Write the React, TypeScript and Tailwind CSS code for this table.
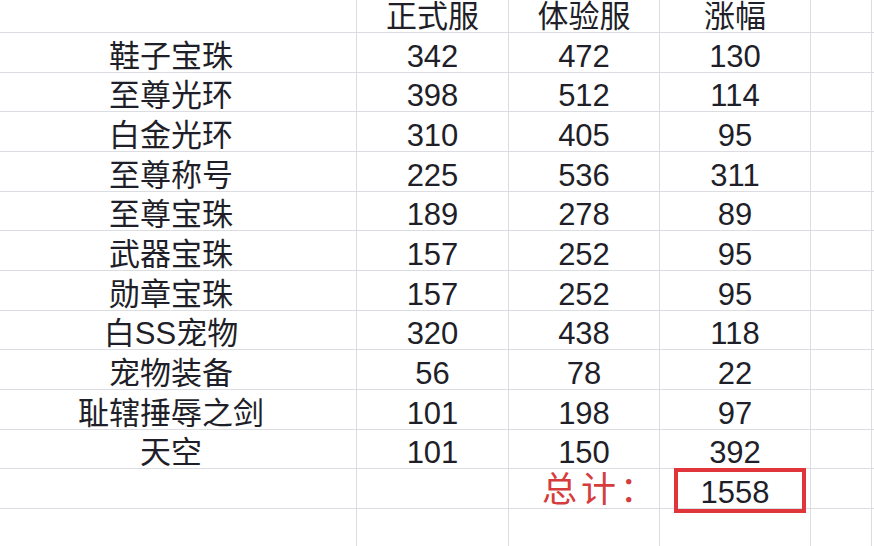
const rows: [string, number, number, number][] = [
  ["鞋子宝珠", 342, 472, 130],
  ["至尊光环", 398, 512, 114],
  ["白金光环", 310, 405, 95],
  ["至尊称号", 225, 536, 311],
  ["至尊宝珠", 189, 278, 89],
  ["武器宝珠", 157, 252, 95],
  ["勋章宝珠", 157, 252, 95],
  ["白SS宠物", 320, 438, 118],
  ["宠物装备", 56, 78, 22],
  ["耻辖捶辱之剑", 101, 198, 97],
  ["天空", 101, 150, 392],
];

const cell = "flex items-end justify-center border-r border-[#dcdde2] leading-[31px]";

function Row({ cells, h = "h-[39.67px]" }: { cells: (string | number)[]; h?: string }) {
  return (
    <div className={`flex ${h} border-b border-[#dcdde2]`}>
      <div className={`${cell} w-[357px] pr-[14px]`}>{cells[0]}</div>
      <div className={`${cell} w-[152px]`}>{cells[1]}</div>
      <div className={`${cell} w-[151px]`}>{cells[2]}</div>
      <div className={`${cell} w-[151px]`}>{cells[3]}</div>
      <div className={`${cell} w-[61px]`}></div>
      <div className="flex-1"></div>
    </div>
  );
}

export default function App() {
  return (
    <div className="w-[874px] h-[546px] overflow-hidden bg-white text-[#1f1f29] text-[31px] font-['Liberation_Sans','Noto_Sans_CJK_SC',sans-serif]">
      <Row cells={["", "正式服", "体验服", "涨幅"]} h="h-[33px]" />
      {rows.map((r) => (
        <Row key={r[0]} cells={r} />
      ))}

      {/* total row */}
      <div className="flex h-[39.67px] border-b border-[#dcdde2]">
        <div className={`${cell} w-[357px]`}></div>
        <div className={`${cell} w-[152px]`}></div>
        <div className={`${cell} w-[151px] justify-end! text-[35px] leading-[36px] tracking-[4px] text-[#d63c3c]`}>
          总计：
        </div>
        <div className={`${cell} w-[151px] relative`}>
          1558
          <div className="absolute left-[14px] top-[-1px] w-[132px] h-[45px] border-[4px] border-[#e0353a]"></div>
        </div>
        <div className={`${cell} w-[61px]`}></div>
        <div className="flex-1"></div>
      </div>

      <div className="flex h-[38px]">
        <div className={`${cell} w-[357px]`}></div>
        <div className={`${cell} w-[152px]`}></div>
        <div className={`${cell} w-[151px]`}></div>
        <div className={`${cell} w-[151px]`}></div>
        <div className={`${cell} w-[61px]`}></div>
        <div className="flex-1"></div>
      </div>
    </div>
  );
}
